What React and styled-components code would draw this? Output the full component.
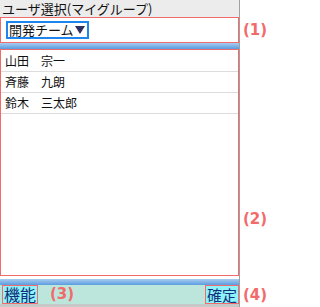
import styled, { createGlobalStyle } from "styled-components";

const Global = createGlobalStyle`
  html, body { margin: 0; padding: 0; background: #fff; }
  body { font-family: "Noto Sans CJK JP", "DejaVu Sans", sans-serif; }
`;

const Page = styled.div`
  width: 270px;
  height: 307px;
  display: flex;
  flex-direction: column;
  overflow: hidden;
`;

const Row = styled.div`
  display: flex;
  height: ${(p) => p.h}px;
  flex: none;
`;

const Panel = styled.div`
  width: 240px;
  flex: none;
  box-sizing: border-box;
  border-right: 1px solid #a0a0a0;
  background: ${(p) => p.bg || "#fff"};
  display: flex;
  flex-direction: column;
`;

const Marked = styled.div`
  flex: 1;
  box-sizing: border-box;
  border: 1px solid #f26b6b;
  display: flex;
  flex-direction: column;
  align-items: flex-start;
`;

const Label = styled.div`
  flex: 1;
  display: flex;
  align-items: ${(p) => p.align || "center"};
  justify-content: center;
  padding-bottom: ${(p) => p.pb || 0}px;
  color: #f26b6b;
  font-family: "DejaVu Sans", sans-serif;
  font-weight: bold;
  font-size: 15px;
`;

const Header = styled.div`
  height: 100%;
  background: #ececec;
  font-size: 13px;
  line-height: 17px;
  padding-left: 2px;
  color: #111;
  white-space: nowrap;
`;

const SelectBox = styled.div`
  margin: 3px 0 0 5px;
  height: 18px;
  box-sizing: border-box;
  border: 2px solid #1c86ee;
  display: flex;
  align-items: center;
  padding: 0 2px 0 1px;
  font-size: 13px;
  line-height: 14px;
  color: #111;
  white-space: nowrap;
`;

const Arrow = styled.span`
  width: 0;
  height: 0;
  margin-left: 1px;
  border-left: 5px solid transparent;
  border-right: 5px solid transparent;
  border-top: 8px solid #2e3060;
`;

const Bar = styled.div`
  height: 100%;
  background: linear-gradient(#a9cdef, #5b9ce0);
`;

const Person = styled.div`
  align-self: stretch;
  height: 20px;
  line-height: 20px;
  border-bottom: 1px solid #dcdcdc;
  padding-left: 4px;
  font-size: 12px;
  color: #111;
  white-space: nowrap;
  &:first-child { margin-top: 1px; }
`;

const Footer = styled.div`
  height: 100%;
  background: #bce6db;
  display: flex;
  align-items: stretch;
`;

const FooterBtn = styled.div`
  box-sizing: border-box;
  border: 1px solid #f26b6b;
  background: #8ef3fb;
  color: #10307a;
  font-size: ${(p) => p.fs || 15}px;
  line-height: 17px;
  padding: 0 1px;
  margin-left: ${(p) => p.ml || 0}px;
  white-space: nowrap;
`;

const FooterMark = styled.div`
  flex: 1;
  padding-left: 12px;
  color: #f26b6b;
  font-family: "DejaVu Sans", sans-serif;
  font-weight: bold;
  font-size: 15px;
  line-height: 19px;
`;

const Gap = styled.div`
  height: ${(p) => p.h}px;
  flex: none;
  width: 240px;
  box-sizing: border-box;
  border-right: 1px solid #a0a0a0;
  background: ${(p) => p.bg || "#fff"};
`;

const people = ["山田　宗一", "斉藤　九朗", "鈴木　三太郎"];

export default function App() {
  return (
    <>
      <Global />
      <Page>
        <Row h={17}>
          <Panel>
            <Header>ユーザ選択(マイグループ)</Header>
          </Panel>
          <Label />
        </Row>
        <Row h={26}>
          <Panel>
            <Marked>
              <SelectBox>
                開発チーム<Arrow />
              </SelectBox>
            </Marked>
          </Panel>
          <Label>(1)</Label>
        </Row>
        <Row h={6}>
          <Panel>
            <Bar />
          </Panel>
          <Label />
        </Row>
        <Row h={227}>
          <Panel>
            <Marked>
              {people.map((name) => (
                <Person key={name}>{name}</Person>
              ))}
            </Marked>
          </Panel>
          <Label align="flex-end" pb={48}>(2)</Label>
        </Row>
        <Gap h={3} />
        <Row h={6}>
          <Panel>
            <Bar />
          </Panel>
          <Label />
        </Row>
        <Row h={19}>
          <Panel>
            <Footer>
              <FooterBtn fs={16} ml={2}>機能</FooterBtn>
              <FooterMark>(3)</FooterMark>
              <FooterBtn>確定</FooterBtn>
            </Footer>
          </Panel>
          <Label>(4)</Label>
        </Row>
        <Gap h={3} bg="#c8c8c8" />
      </Page>
    </>
  );
}
